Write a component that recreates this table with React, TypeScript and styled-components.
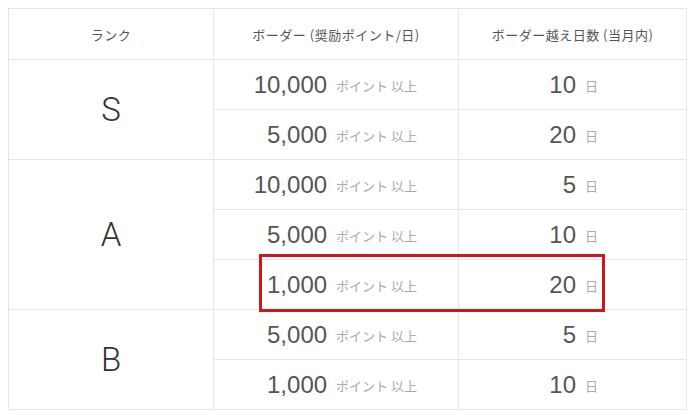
import React from "react";
import styled, { createGlobalStyle } from "styled-components";

const GlobalStyle = createGlobalStyle`
  body {
    margin: 8px;
    background: #fff;
    font-family: "Liberation Sans", "Noto Sans CJK JP", sans-serif;
  }
`;

const Wrap = styled.div`
  position: relative;
`;

const Table = styled.table`
  width: 100%;
  table-layout: fixed;
  border-collapse: collapse;
  border: 1px solid #e6e6e6;
`;

const HeadCell = styled.th`
  height: 50px;
  padding: 0;
  border: 1px solid #e6e6e6;
  font-family: "Noto Sans CJK JP", sans-serif;
  font-size: 13px;
  letter-spacing: 0.5px;
  font-weight: normal;
  color: #555;
  text-align: center;
  vertical-align: middle;
`;

const RankCell = styled.td`
  padding: 0;
  border: 1px solid #e6e6e6;
  font-family: Roboto, "Liberation Sans", sans-serif;
  font-weight: 300;
  font-size: 33px;
  color: #333;
  text-align: center;
  vertical-align: middle;
`;

const ValueCell = styled.td<{ $pad: number }>`
  height: 49px;
  padding: 0 ${(p) => p.$pad}px 0 0;
  border: 1px solid #e6e6e6;
  text-align: right;
  vertical-align: middle;
  white-space: nowrap;
`;

const Big = styled.span`
  font-family: "Liberation Sans", sans-serif;
  font-size: 24px;
  color: #555;
`;

const Unit = styled.span<{ $gap: number }>`
  margin-left: ${(p) => p.$gap}px;
  font-family: "Noto Sans CJK JP", sans-serif;
  font-size: 13px;
  color: #aaa;
  position: relative;
  top: -2px;
`;

const Highlight = styled.div`
  position: absolute;
  left: 251px;
  top: 246px;
  width: 340px;
  height: 52px;
  border: 3px solid #c9191e;
  pointer-events: none;
`;

type Row = { points: string; days: string };
type Group = { rank: string; rows: Row[] };

const groups: Group[] = [
  { rank: "S", rows: [{ points: "10,000", days: "10" }, { points: "5,000", days: "20" }] },
  {
    rank: "A",
    rows: [
      { points: "10,000", days: "5" },
      { points: "5,000", days: "10" },
      { points: "1,000", days: "20" },
    ],
  },
  { rank: "B", rows: [{ points: "5,000", days: "5" }, { points: "1,000", days: "10" }] },
];

const App = () => {
  return (
    <>
      <GlobalStyle />
      <Wrap>
        <Table>
          <colgroup>
            <col style={{ width: 205 }} />
            <col style={{ width: 245 }} />
            <col />
          </colgroup>
          <thead>
            <tr>
              <HeadCell>ランク</HeadCell>
              <HeadCell>ボーダー (奨励ポイント/日)</HeadCell>
              <HeadCell>ボーダー越え日数 (当月内)</HeadCell>
            </tr>
          </thead>
          <tbody>
            {groups.map((g) =>
              g.rows.map((r, i) => (
                <tr key={g.rank + i}>
                  {i === 0 && <RankCell rowSpan={g.rows.length}>{g.rank}</RankCell>}
                  <ValueCell $pad={41}>
                    <Big>{r.points}</Big>
                    <Unit $gap={9}>ポイント 以上</Unit>
                  </ValueCell>
                  <ValueCell $pad={88}>
                    <Big>{r.days}</Big>
                    <Unit $gap={9}>日</Unit>
                  </ValueCell>
                </tr>
              ))
            )}
          </tbody>
        </Table>
        <Highlight />
      </Wrap>
    </>
  );
};

export default App;
